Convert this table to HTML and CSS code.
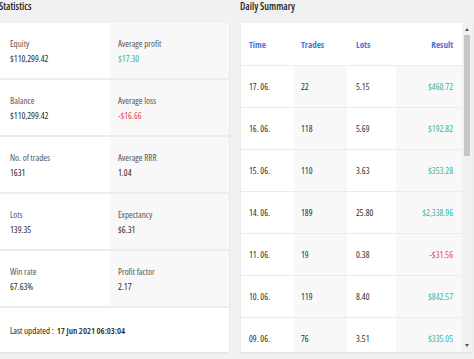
FILE: index.html
```html
<!DOCTYPE html>
<html lang="en">
<head>
<meta charset="utf-8">
<title>Statistics</title>
<link rel="stylesheet" href="styles.css">
</head>
<body>
<div class="page">
  <section class="section">
    <h2 class="title">Statistics</h2>
    <div class="card stats">
      <div class="stat-row">
        <div class="cell"><div class="label">Equity</div><div class="value">$110,299.42</div></div>
        <div class="cell alt"><div class="label">Average profit</div><div class="value pos">$17.30</div></div>
      </div>
      <div class="stat-row">
        <div class="cell"><div class="label">Balance</div><div class="value">$110,299.42</div></div>
        <div class="cell alt"><div class="label">Average loss</div><div class="value neg">-$16.66</div></div>
      </div>
      <div class="stat-row">
        <div class="cell"><div class="label">No. of trades</div><div class="value">1631</div></div>
        <div class="cell alt"><div class="label">Average RRR</div><div class="value">1.04</div></div>
      </div>
      <div class="stat-row">
        <div class="cell"><div class="label">Lots</div><div class="value">139.35</div></div>
        <div class="cell alt"><div class="label">Expectancy</div><div class="value">$6.31</div></div>
      </div>
      <div class="stat-row">
        <div class="cell"><div class="label">Win rate</div><div class="value">67.63%</div></div>
        <div class="cell alt"><div class="label">Profit factor</div><div class="value">2.17</div></div>
      </div>
      <div class="footer">Last updated : <b>17 Jun 2021 06:03:04</b></div>
    </div>
  </section>
  <section class="section">
    <h2 class="title">Daily Summary</h2>
    <div class="card daily">
      <div class="table">
        <div class="trow head">
          <div class="c c1">Time</div><div class="c c2">Trades</div><div class="c c3">Lots</div><div class="c c4">Result</div>
        </div>
        <div class="trow">
          <div class="c c1">17. 06.</div><div class="c c2">22</div><div class="c c3">5.15</div><div class="c c4 pos">$460.72</div>
        </div>
        <div class="trow">
          <div class="c c1">16. 06.</div><div class="c c2">118</div><div class="c c3">5.69</div><div class="c c4 pos">$192.82</div>
        </div>
        <div class="trow">
          <div class="c c1">15. 06.</div><div class="c c2">110</div><div class="c c3">3.63</div><div class="c c4 pos">$353.28</div>
        </div>
        <div class="trow">
          <div class="c c1">14. 06.</div><div class="c c2">189</div><div class="c c3">25.80</div><div class="c c4 pos">$2,338.96</div>
        </div>
        <div class="trow">
          <div class="c c1">11. 06.</div><div class="c c2">19</div><div class="c c3">0.38</div><div class="c c4 neg">-$31.56</div>
        </div>
        <div class="trow">
          <div class="c c1">10. 06.</div><div class="c c2">119</div><div class="c c3">8.40</div><div class="c c4 pos">$842.57</div>
        </div>
        <div class="trow">
          <div class="c c1">09. 06.</div><div class="c c2">76</div><div class="c c3">3.51</div><div class="c c4 pos">$335.05</div>
        </div>
      </div>
      <div class="scrollbar">
        <div class="arrow up"></div>
        <div class="track"><div class="thumb"></div></div>
        <div class="arrow down"></div>
      </div>
    </div>
  </section>
</div>
</body>
</html>
```

FILE: styles.css
```css
* { box-sizing: border-box; }
html, body { margin: 0; padding: 0; }
body {
  background: #f1f1f1;
  font-family: "Liberation Sans Narrow", "Open Sans", "Noto Sans", sans-serif;
  font-stretch: condensed;
  font-size: 9px;
  font-weight: 500;
  color: #2a2a2a;
  width: 474px;
  height: 359px;
  overflow: hidden;
}
.page {
  display: grid;
  grid-template-columns: 229px 231px;
  column-gap: 12px;
}
.section { display: flex; flex-direction: column; }
.title {
  margin: 0 0 10px -1px;
  font-size: 10px;
  line-height: 13px;
  font-weight: 600;
  color: #1e1e1e;
}
.card {
  background: #fff;
  box-shadow: 0 1px 2px rgba(0,0,0,0.08);
  height: 329px;
}
.stats { display: flex; flex-direction: column; }
.stat-row {
  display: grid;
  grid-template-columns: 110px 1fr;
  height: 57px;
  flex: none;
  border-bottom: 2px solid #ececec;
}
.cell {
  padding: 15px 10px 0 10px;
  display: flex;
  flex-direction: column;
  gap: 3px;
}
.cell.alt { background: #f8f8f8; padding-left: 8px; }
.label { line-height: 12px; color: #555; }
.value { line-height: 12px; color: #1f1f1f; }
.pos { color: #2db7a1; }
.neg { color: #e2445e; }
.footer {
  flex: 1;
  display: flex;
  align-items: center;
  gap: 3px;
  padding-left: 10px;
  color: #1e1e1e;
  font-weight: 500;
}
.footer b { font-weight: 600; }
.daily { display: flex; overflow: hidden; }
.table { flex: 1; display: flex; flex-direction: column; }
.trow {
  display: grid;
  grid-template-columns: 53px 53px 49px 1fr;
  height: 42px;
  flex: none;
  border-bottom: 1px solid #ebebeb;
}
.trow.head { height: 43px; }
.c {
  display: flex;
  align-items: center;
  color: #2c2c2c;
}
.c1 { padding-left: 8px; }
.c2 { padding-left: 7px; background: #f8f8f8; }
.c3 { padding-left: 9px; }
.c4 { justify-content: flex-end; padding-right: 9px; background: #f8f8f8; }
.trow .c.pos { color: #2db7a1; }
.trow .c.neg { color: #e2445e; }
.head .c { background: #fff; color: #3d78d4; font-weight: 700; }
.scrollbar {
  width: 10px;
  flex: none;
  background: #f1f1f1;
  display: flex;
  flex-direction: column;
  align-items: center;
}
.arrow { width: 0; height: 0; border-left: 2.5px solid transparent; border-right: 2.5px solid transparent; }
.arrow.up { border-bottom: 3px solid #505050; margin-top: 5px; }
.arrow.down { border-top: 3px solid #505050; margin-bottom: 5px; }
.track { flex: 1; width: 100%; display: flex; justify-content: center; padding-top: 4px; }
.thumb { width: 6px; height: 121px; background: #c6c6c6; }
```
